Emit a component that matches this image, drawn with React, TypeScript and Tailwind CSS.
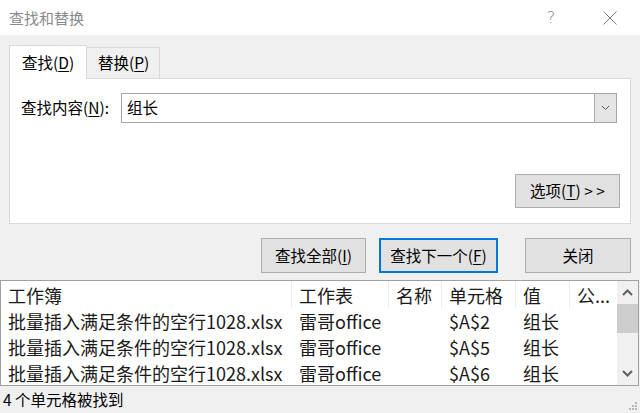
import React from "react";

const cols = [291, 97, 53, 74, 54, 47];

function U({ c }: { c: string }) {
  return <span className="underline underline-offset-2 decoration-1">{c}</span>;
}

export default function App() {
  const rows = [
    ["批量插入满足条件的空行1028.xlsx", "雷哥office", "", "$A$2", "组长", ""],
    ["批量插入满足条件的空行1028.xlsx", "雷哥office", "", "$A$5", "组长", ""],
    ["批量插入满足条件的空行1028.xlsx", "雷哥office", "", "$A$6", "组长", ""],
  ];
  const header = ["工作簿", "工作表", "名称", "单元格", "值", "公..."];
  return (
    <div className="w-[640px] h-[413px] bg-[#f0f0f0] flex flex-col overflow-hidden text-black font-['Noto_Sans_CJK_SC',sans-serif]">
      {/* title bar */}
      <div className="h-[35px] bg-white flex items-center shrink-0">
        <span className="pl-[9px] text-[15px] text-[#8a8a8a] leading-none">查找和替换</span>
        <div className="flex-1" />
        <span className="w-[20px] text-center text-[16px] text-[#8a8a8a] leading-none font-['DejaVu_Sans',sans-serif] font-light">?</span>
        <div className="w-[42px]" />
        <svg width="14" height="14" viewBox="0 0 14 14" className="mr-[23px]">
          <path d="M0.5 0.5 L13.5 13.5 M13.5 0.5 L0.5 13.5" stroke="#7a7a7a" strokeWidth="1" />
        </svg>
      </div>

      {/* tabs */}
      <div className="mt-[10px] mx-[9px] flex items-end h-[34px] shrink-0">
        <div className="w-[78px] h-[34px] bg-white border-t border-l border-r border-[#d9d9d9] flex items-center pl-[12px] text-[15.5px] leading-none">
          查找(<U c="D" />)
        </div>
        <div className="w-[73px] h-[32px] bg-[#f0f0f0] border-t border-r border-b border-[#d9d9d9] flex items-center pl-[11px] text-[15.5px] leading-none">
          替换(<U c="P" />)
        </div>
        <div className="flex-1 h-full border-b border-[#d9d9d9]" />
      </div>

      {/* panel */}
      <div className="mx-[9px] h-[145px] bg-white border-l border-r border-b border-[#d9d9d9] flex flex-col shrink-0">
        <div className="mt-[14px] pl-[11px] flex items-center">
          <span className="w-[100px] text-[15.5px] leading-none">
            查找内容(<U c="N" />):
          </span>
          <div className="w-[496px] h-[30px] border border-[#a5a5a5] flex items-center">
            <span className="pl-[5px] text-[15.5px] leading-none">组长</span>
            <div className="ml-auto w-[22px] h-[28px] bg-[#e5e5e5] border-l border-[#acacac] flex items-center justify-center">
              <svg width="9" height="6" viewBox="0 0 9 6">
                <path d="M1 1 L4.5 4.5 L8 1" stroke="#555" strokeWidth="1" fill="none" />
              </svg>
            </div>
          </div>
        </div>
        <div className="mt-auto self-end mr-[10px] mb-[15px] w-[105px] h-[34px] bg-[#e1e1e1] border border-[#adadad] flex items-center justify-center text-[15.5px] leading-none">
          选项(<U c="T" />)&nbsp;&gt; &gt;
        </div>
      </div>

      {/* buttons */}
      <div className="mt-[14px] h-[35px] flex shrink-0 pl-[261px]">
        <div className="w-[105px] h-[35px] bg-[#e1e1e1] border border-[#adadad] flex items-center justify-center text-[15.5px] leading-none">
          查找全部(<U c="I" />)
        </div>
        <div className="ml-[13px] w-[119px] h-[35px] bg-[#e1e1e1] border-2 border-[#0078d7] flex items-center justify-center text-[15.5px] leading-none">
          查找下一个(<U c="F" />)
        </div>
        <div className="ml-[27px] w-[106px] h-[35px] bg-[#e1e1e1] border border-[#adadad] flex items-center justify-center text-[15.5px] leading-none">
          关闭
        </div>
      </div>

      {/* list */}
      <div className="mt-[7px] w-[639px] h-[106px] border border-[#a0a0a0] bg-white flex shrink-0 overflow-hidden">
        <div className="flex flex-col w-[616px] text-[18px] leading-none text-[#1a1a1a]">
          <div className="flex h-[27px] shrink-0">
            {header.map((h, i) => (
              <div
                key={i}
                style={{ width: cols[i] }}
                className={`h-full flex items-center pl-[7px] whitespace-nowrap overflow-hidden ${i < 5 ? "border-r border-[#ececec]" : ""}`}
              >
                {h}
              </div>
            ))}
          </div>
          {rows.map((r, ri) => (
            <div key={ri} className="flex h-[26px] shrink-0">
              {r.map((c, i) => (
                <div
                  key={i}
                  style={{ width: cols[i] }}
                  className="h-full flex items-center pl-[7px] whitespace-nowrap overflow-hidden"
                >
                  {c}
                </div>
              ))}
            </div>
          ))}
        </div>
        <div className="w-[21px] h-full bg-[#f0f0f0] flex flex-col items-center">
          <div className="h-[23px] w-full flex items-center justify-center">
            <svg width="11" height="7" viewBox="0 0 11 7">
              <path d="M1 6 L5.5 1.5 L10 6" stroke="#606060" strokeWidth="2" fill="none" />
            </svg>
          </div>
          <div className="w-full h-[29px] bg-[#cdcdcd]" />
          <div className="flex-1" />
          <div className="h-[23px] w-full flex items-center justify-center">
            <svg width="11" height="7" viewBox="0 0 11 7">
              <path d="M1 1 L5.5 5.5 L10 1" stroke="#606060" strokeWidth="2" fill="none" />
            </svg>
          </div>
        </div>
      </div>

      {/* status bar */}
      <div className="flex-1 flex items-center relative">
        <span className="pl-[3px] text-[15.5px] leading-none">4 个单元格被找到</span>
        <svg width="10" height="10" viewBox="0 0 10 10" className="absolute right-[2px] bottom-[2px]">
          <rect x="7" y="1" width="2" height="2" fill="#b5b5b5" />
          <rect x="4" y="4" width="2" height="2" fill="#b5b5b5" />
          <rect x="7" y="4" width="2" height="2" fill="#b5b5b5" />
          <rect x="1" y="7" width="2" height="2" fill="#b5b5b5" />
          <rect x="4" y="7" width="2" height="2" fill="#b5b5b5" />
          <rect x="7" y="7" width="2" height="2" fill="#b5b5b5" />
        </svg>
      </div>
    </div>
  );
}
